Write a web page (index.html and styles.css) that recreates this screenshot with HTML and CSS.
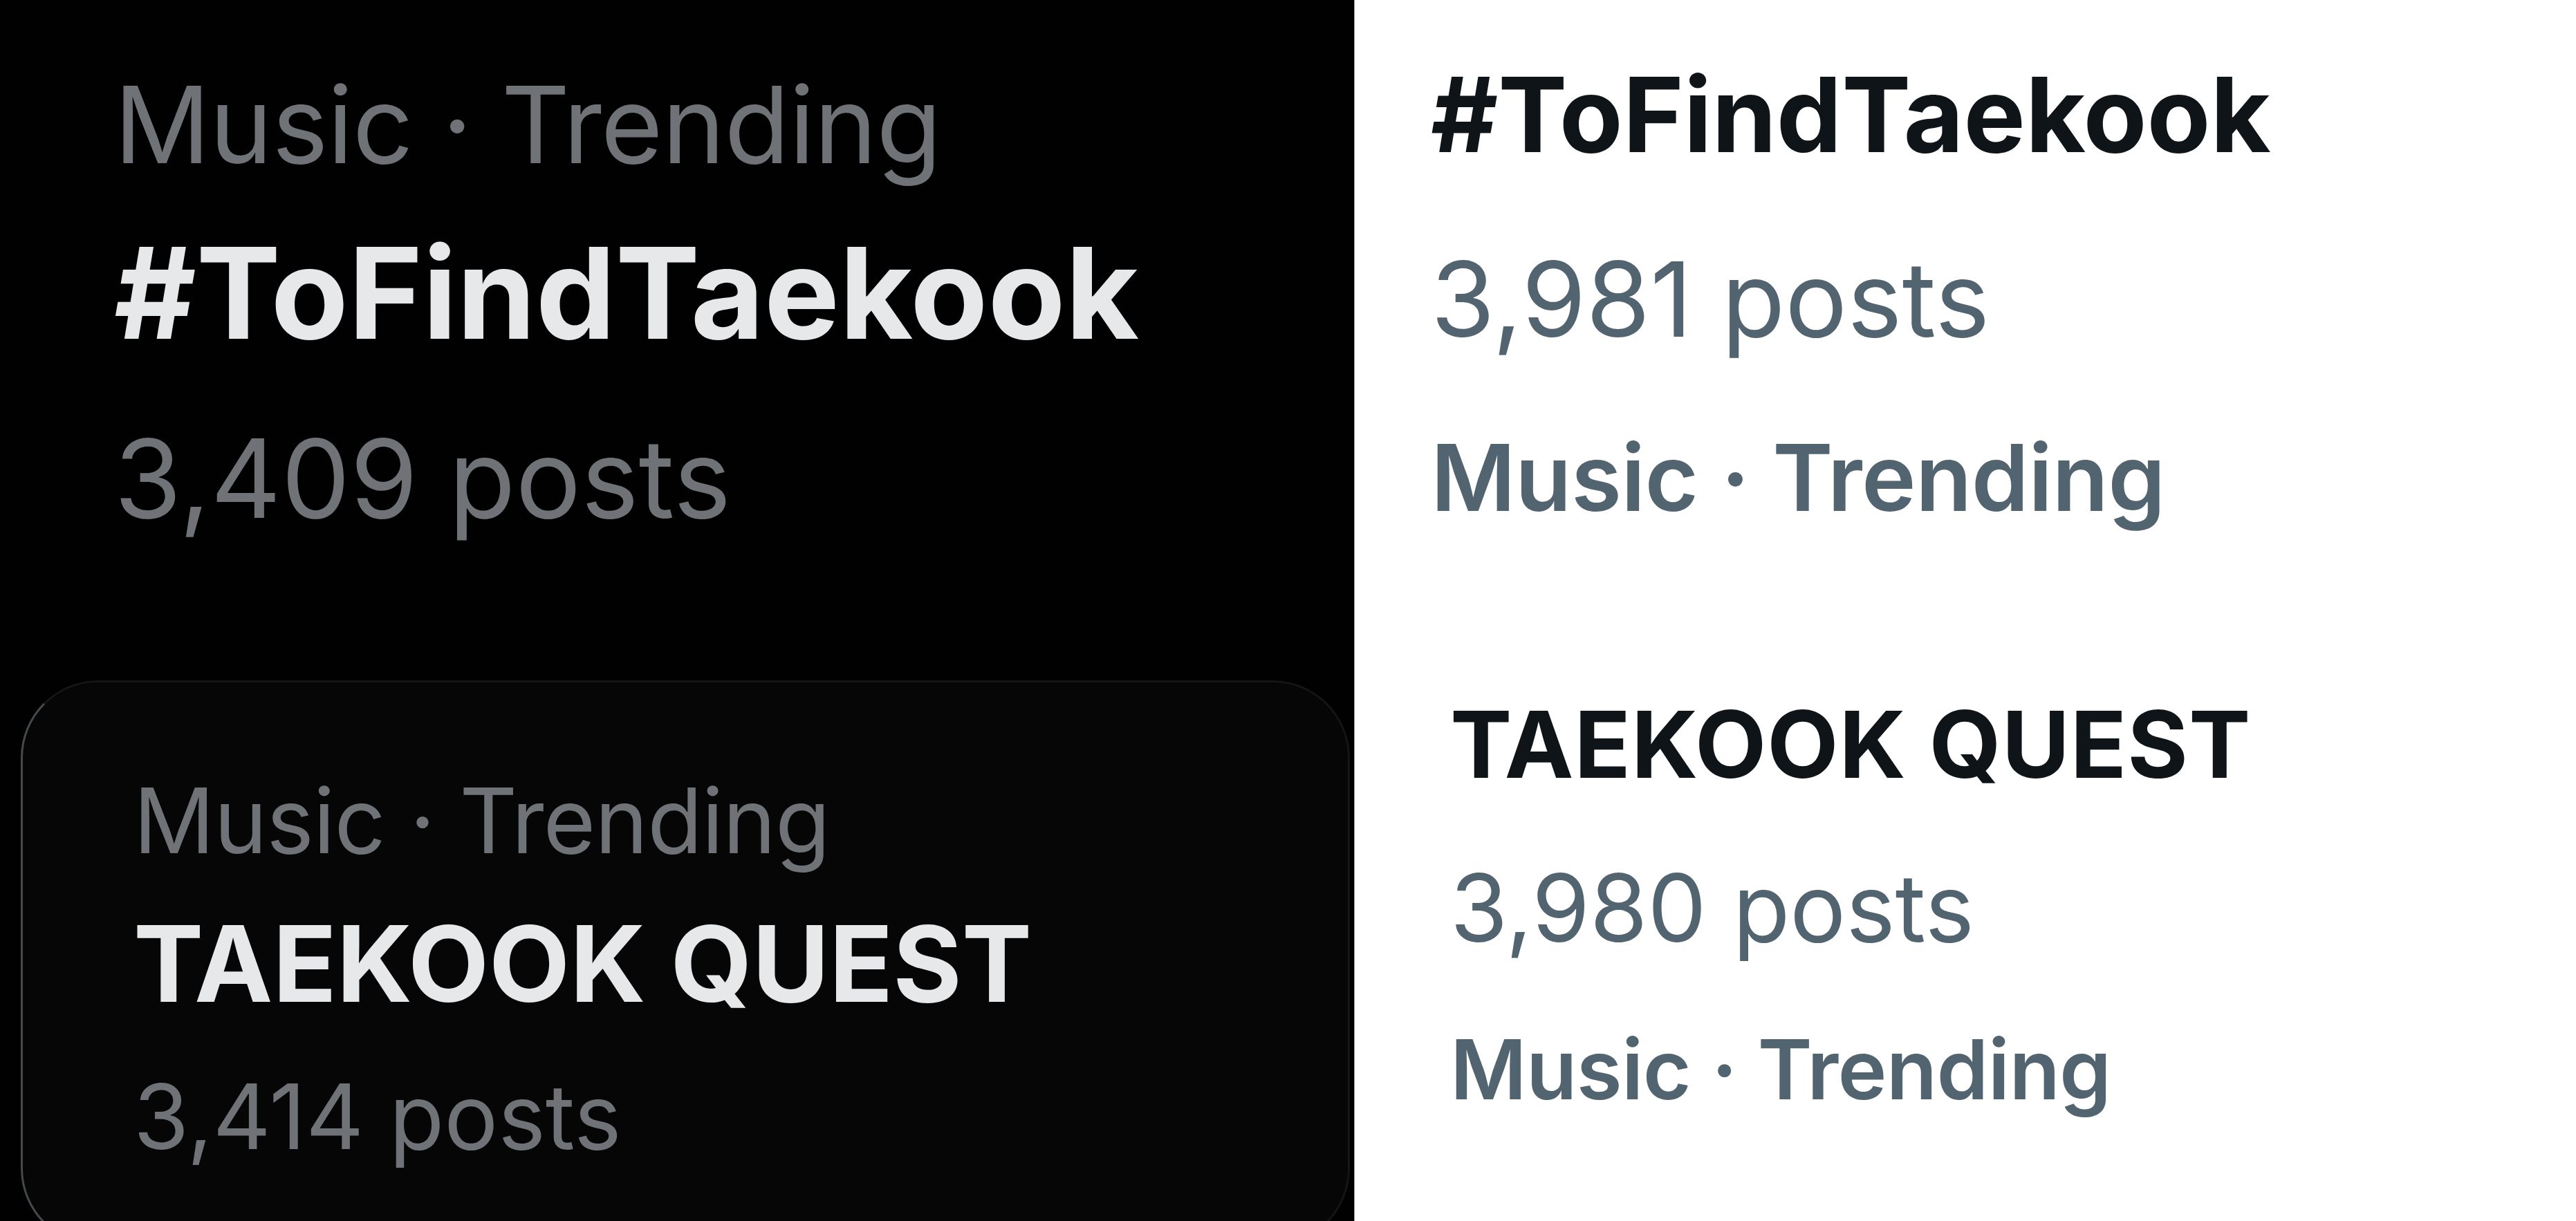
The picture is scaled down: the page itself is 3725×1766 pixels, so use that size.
FILE: index.html
```html
<!DOCTYPE html>
<html lang="en">
<head>
    <meta charset="UTF-8">
    <meta name="viewport" content="width=device-width, initial-scale=1.0">
    <title>Trending comparison</title>
    <link rel="stylesheet" href="styles.css">
</head>
<body>
    <div class="page">
        <div class="panel panel-dark">
            <div class="trend trend-top">
                <div class="meta">Music · Trending</div>
                <div class="name">#ToFindTaekook</div>
                <div class="count">3,409 posts</div>
            </div>

            <div class="trend trend-card">
                <div class="meta">Music · Trending</div>
                <div class="name">TAEKOOK QUEST</div>
                <div class="count">3,414 posts</div>
            </div>
        </div>

        <div class="panel panel-light">
            <div class="trend trend-first">
                <div class="name">#ToFindTaekook</div>
                <div class="count">3,981 posts</div>
                <div class="meta">Music · Trending</div>
            </div>

            <div class="trend trend-second">
                <div class="name">TAEKOOK QUEST</div>
                <div class="count">3,980 posts</div>
                <div class="meta">Music · Trending</div>
            </div>
        </div>
    </div>
</body>
</html>
```

FILE: styles.css
```css
html, body {
    margin: 0;
    padding: 0;
    height: 100%;
    overflow: hidden;
}
body {
    font-family: Inter, "Noto Sans", sans-serif;
    line-height: 1.2;
}
.page {
    display: flex;
    height: 100vh;
}
.panel {
    overflow: hidden;
}
.trend div {
    white-space: nowrap;
}

/* dark side */
.panel-dark {
    width: 1958px;
    flex-shrink: 0;
    background-color: #010101;
}
.panel-dark .meta,
.panel-dark .count {
    color: #6f7377;
}
.panel-dark .name {
    color: #e6e8ea;
    font-weight: 700;
}
.trend-top {
    padding: 88px 0 0 165px;
}
.trend-top .meta {
    font-size: 154px;
    letter-spacing: -1px;
}
.trend-top .name {
    font-size: 183px;
    margin-top: 41px;
}
.trend-top .count {
    font-size: 158px;
    margin-top: 64px;
}
.trend-card {
    margin: 197px 6px 0 30px;
    height: 690px;
    padding: 122px 0 0 160px;
    background-color: #060606;
    border: 3px solid #141516;
    border-left-color: #46494c;
    border-radius: 112px;
}
.trend-card .meta {
    font-size: 130px;
    letter-spacing: -1px;
}
.trend-card .name {
    font-size: 152px;
    margin-top: 38px;
}
.trend-card .count {
    font-size: 130px;
    margin-top: 52px;
}

/* light side */
.panel-light {
    flex: 1;
    background-color: #ffffff;
    border-left: 1px solid #9a9a9a;
}
.panel-light .name {
    color: #0f1419;
    font-weight: 700;
}
.panel-light .count {
    color: #536471;
}
.panel-light .meta {
    color: #536471;
    font-weight: 600;
}
.trend-first {
    padding: 76px 0 0 110px;
}
.trend-first .name {
    font-size: 150px;
}
.trend-first .count {
    font-size: 150px;
    margin-top: 87px;
}
.trend-first .meta {
    font-size: 133px;
    margin-top: 88px;
    letter-spacing: -0.6px;
}
.trend-second {
    padding: 225px 0 0 138px;
}
.trend-second .name {
    font-size: 134px;
    letter-spacing: 1px;
}
.trend-second .count {
    font-size: 135px;
    margin-top: 76px;
}
.trend-second .meta {
    font-size: 120px;
    margin-top: 81px;
    letter-spacing: -0.7px;
}
```
